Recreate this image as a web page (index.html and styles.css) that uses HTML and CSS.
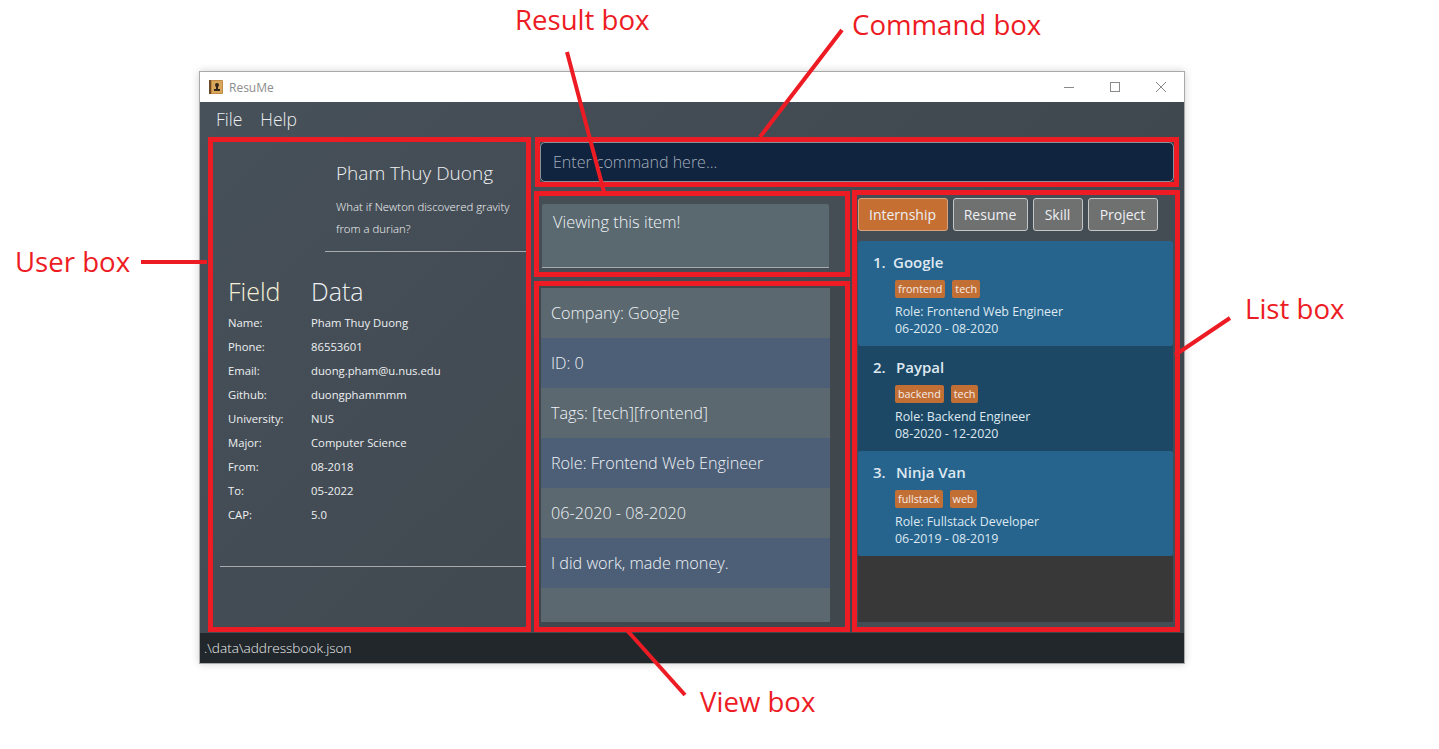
FILE: index.html
```html
<!DOCTYPE html>
<html lang="en">
<head>
    <meta charset="UTF-8">
    <meta name="viewport" content="width=device-width, initial-scale=1.0">
    <title>ResuMe - Layout</title>
    <link rel="stylesheet" href="styles.css">
</head>
<body>
    <!-- annotation labels and pointers -->
    <span class="note note-result">Result box</span>
    <span class="note note-command">Command box</span>
    <span class="note note-user">User box</span>
    <span class="note note-list">List box</span>
    <span class="note note-view">View box</span>

    <div class="window">
        <div class="titlebar">
            <svg class="app-icon" width="14" height="14" viewBox="0 0 14 14">
                <rect x="0" y="0" width="14" height="14" rx="1" fill="#c08a42"/>
                <rect x="0" y="0" width="2" height="14" fill="#6b4a25"/>
                <rect x="3" y="1" width="10" height="12" fill="#d9a75c"/>
                <circle cx="8" cy="5" r="2" fill="#33261a"/>
                <rect x="7" y="6" width="2" height="3" fill="#33261a"/>
                <rect x="5" y="9" width="6" height="2" fill="#33261a"/>
            </svg>
            <span class="app-name">ResuMe</span>
            <div class="window-controls">
                <svg width="12" height="12" viewBox="0 0 12 12"><path d="M1 6.5h10" stroke="#8a8a8a" fill="none"/></svg>
                <svg width="12" height="12" viewBox="0 0 12 12"><rect x="1.5" y="1.5" width="9" height="9" stroke="#8a8a8a" fill="none"/></svg>
                <svg width="12" height="12" viewBox="0 0 12 12"><path d="M1 1l10 10M11 1L1 11" stroke="#8a8a8a" fill="none"/></svg>
            </div>
        </div>

        <div class="menubar">
            <span>File</span>
            <span>Help</span>
        </div>

        <div class="main">
            <section class="box user-box">
                <div class="user-head">
                    <div class="user-name">Pham Thuy Duong</div>
                    <p class="user-quote">What if Newton discovered gravity from a durian?</p>
                </div>
                <div class="user-table">
                    <div class="table-title">Field</div><div class="table-title">Data</div>
                    <div>Name:</div><div>Pham Thuy Duong</div>
                    <div>Phone:</div><div>86553601</div>
                    <div>Email:</div><div>duong.pham@u.nus.edu</div>
                    <div>Github:</div><div>duongphammmm</div>
                    <div>University:</div><div>NUS</div>
                    <div>Major:</div><div>Computer Science</div>
                    <div>From:</div><div>08-2018</div>
                    <div>To:</div><div>05-2022</div>
                    <div>CAP:</div><div>5.0</div>
                </div>
                <div class="user-rule"></div>
            </section>

            <div class="right-side">
                <section class="box command-box">
                    <input class="command-input" type="text" placeholder="Enter command here...">
                </section>

                <div class="lower">
                    <div class="middle">
                        <section class="box result-box">
                            <div class="result-text">Viewing this item!</div>
                        </section>
                        <section class="box view-box">
                            <div class="view-list">
                                <div class="view-row">Company: Google</div>
                                <div class="view-row">ID: 0</div>
                                <div class="view-row">Tags: [tech][frontend]</div>
                                <div class="view-row">Role: Frontend Web Engineer</div>
                                <div class="view-row">06-2020 - 08-2020</div>
                                <div class="view-row">I did work, made money.</div>
                            </div>
                        </section>
                    </div>

                    <section class="box list-box">
                        <div class="tabs">
                            <button class="tab tab-active">Internship</button>
                            <button class="tab tab-resume">Resume</button>
                            <button class="tab tab-skill">Skill</button>
                            <button class="tab tab-project">Project</button>
                        </div>
                        <div class="cards">
                            <div class="card">
                                <div class="card-title"><span class="card-num">1.</span>Google</div>
                                <div class="tags"><span class="tag">frontend</span><span class="tag">tech</span></div>
                                <div class="card-line">Role: Frontend Web Engineer</div>
                                <div class="card-line">06-2020 - 08-2020</div>
                            </div>
                            <div class="card card-alt">
                                <div class="card-title"><span class="card-num wide">2.</span>Paypal</div>
                                <div class="tags"><span class="tag">backend</span><span class="tag">tech</span></div>
                                <div class="card-line">Role: Backend Engineer</div>
                                <div class="card-line">08-2020 - 12-2020</div>
                            </div>
                            <div class="card">
                                <div class="card-title"><span class="card-num wide">3.</span>Ninja Van</div>
                                <div class="tags"><span class="tag">fullstack</span><span class="tag">web</span></div>
                                <div class="card-line">Role: Fullstack Developer</div>
                                <div class="card-line">06-2019 - 08-2019</div>
                            </div>
                        </div>
                    </section>
                </div>
            </div>
        </div>

        <div class="statusbar">.\data\addressbook.json</div>
    </div>

    <svg class="pointers" width="1439" height="749" viewBox="0 0 1439 749">
        <path d="M567 52L604 192M842 30L760 137M141 262H207M1230 318L1175 355M625 628L685 695"/>
    </svg>
</body>
</html>
```
FILE: styles.css
```css
body {
    margin: 0;
    height: 749px;
    overflow: hidden;
    background-color: #ffffff;
    font-family: "Open Sans", sans-serif;
    color: #ffffff;
    position: relative;
}

/* annotations */
.note {
    position: absolute;
    color: #ed1c24;
    font-family: "Open Sans", sans-serif;
    font-size: 27.6px;
    line-height: 34px;
    white-space: nowrap;
}
.note-result { left: 515px; top: 2px; }
.note-command { left: 852px; top: 7px; }
.note-user { left: 15px; top: 244px; }
.note-list { left: 1245px; top: 291px; }
.note-view { left: 700px; top: 684px; }
.pointers {
    position: absolute;
    left: 0;
    top: 0;
    pointer-events: none;
}
.pointers path {
    stroke: #ed1c24;
    stroke-width: 4;
    fill: none;
}

/* window */
.window {
    position: absolute;
    left: 199px;
    top: 71px;
    width: 984px;
    height: 591px;
    border: 1px solid #a9a9a9;
    box-shadow: 0 0 8px rgba(0, 0, 0, 0.18);
    display: flex;
    flex-direction: column;
    background: linear-gradient(135deg, #47515a, #3c4349);
}
.titlebar {
    height: 30px;
    flex: none;
    background-color: #ffffff;
    display: flex;
    align-items: center;
    padding-left: 9px;
}
.app-icon { margin-right: 6px; }
.app-name {
    font-size: 12px;
    color: #8d8d8d;
}
.window-controls {
    margin-left: auto;
    display: flex;
    gap: 34px;
    padding-right: 17px;
}
.menubar {
    height: 34px;
    margin-bottom: 1px;
    flex: none;
    display: flex;
    align-items: center;
    gap: 18px;
    padding-left: 16px;
    font-size: 17.5px;
    font-weight: 300;
    color: #eceef0;
}
.main {
    height: 496px;
    flex: none;
    display: flex;
    padding-left: 8px;
}
.statusbar {
    height: 30px;
    flex: none;
    box-sizing: border-box;
    padding-left: 4px;
    line-height: 30px;
    font-size: 13.6px;
    font-weight: 300;
    color: #eceef0;
    background-color: #22272b;
}
.box {
    border: 5px solid #ed1c24;
    box-sizing: border-box;
}

/* user box */
.user-box {
    width: 323px;
    height: 495px;
    flex: none;
    color: #eef0f2;
}
.user-head {
    margin-left: 112px;
    padding: 18px 0 9px 11px;
    height: 110px;
    box-sizing: border-box;
    border-bottom: 1px solid #a7abae;
}
.user-name {
    font-size: 19px;
    font-weight: 300;
    line-height: 26px;
}
.user-quote {
    margin: 10px 0 0;
    font-size: 11.4px;
    line-height: 22px;
    font-weight: 300;
    color: #f6f7f8;
    width: 190px;
}
.user-table {
    display: grid;
    grid-template-columns: 83px 1fr;
    grid-auto-rows: 24px;
    align-items: center;
    padding: 34px 0 0 15px;
    font-size: 11.3px;
}
.table-title {
    height: 38px;
    font-size: 25px;
    font-weight: 300;
    line-height: 38px;
    color: #f3efd6;
}
.user-table .table-title { align-self: end; }
.table-title + .table-title { color: #eef0f2; }
.user-rule {
    margin: 40px 0 0 7px;
    border-top: 1px solid #a7abae;
}

/* right side */
.right-side {
    margin-left: 3px;
    width: 646px;
    display: flex;
    flex-direction: column;
}
.command-box {
    height: 50px;
    margin-left: 1px;
    width: 644px;
    flex: none;
}
.command-input {
    display: block;
    width: 100%;
    height: 40px;
    box-sizing: border-box;
    padding: 0 12px;
    margin: 0;
    border: 1px solid #8b9096;
    border-radius: 5px;
    background-color: #11243f;
    font-family: "Open Sans", sans-serif;
    font-size: 16px;
    font-weight: 300;
    color: #ffffff;
    outline: none;
}
.command-input::placeholder {
    color: #a3aebb;
    opacity: 1;
}
.lower {
    display: flex;
    margin-top: 3px;
    gap: 2px;
}
.middle {
    width: 316px;
    flex: none;
    display: flex;
    flex-direction: column;
    padding-top: 1px;
}

/* result box */
.result-box {
    height: 86px;
    padding: 8px 16px 4px 3px;
    background-color: #454e55;
}
.result-text {
    height: 100%;
    box-sizing: border-box;
    padding: 6px 11px;
    background-color: #5a6870;
    border-radius: 2px 2px 0 0;
    border-bottom: 1px solid #a7abae;
    font-size: 16.4px;
    font-weight: 300;
    line-height: 24px;
    color: #f0f4f8;
}

/* view box */
.view-box {
    height: 351px;
    margin-top: 4px;
    padding: 2px 15px 5px 2px;
    background-color: #40484e;
}
.view-list {
    height: 334px;
    background-color: #5b686f;
}
.view-row {
    height: 50px;
    box-sizing: border-box;
    padding-left: 10px;
    line-height: 50px;
    font-size: 16.2px;
    font-weight: 300;
    color: #f0f4f8;
}
.view-row:nth-child(even) { background-color: #4d5f76; }

/* list box */
.list-box {
    width: 328px;
    height: 442px;
    flex: none;
    padding: 3px 2px 0 1px;
    background-color: #444d54;
}
.tabs {
    display: flex;
    gap: 5px;
    height: 33px;
}
.tab {
    height: 33px;
    padding: 0 1px 0 0;
    border: 1px solid #c4c6c8;
    border-radius: 3px;
    background-color: #6f7070;
    color: #eef0f4;
    font-family: "Open Sans", sans-serif;
    font-size: 14px;
    cursor: pointer;
}
.tab-active { width: 90px; background-color: #c56f33; border-color: #d9a27a; }
.tab-resume { width: 75px; }
.tab-skill { width: 50px; }
.tab-project { width: 70px; }
.cards {
    margin-top: 10px;
    height: 381px;
    background-color: #383838;
}
.card {
    height: 105px;
    box-sizing: border-box;
    padding: 10px 0 0 37px;
    background-color: #26648e;
    border-radius: 2px;
    color: #dfe8f0;
    font-size: 12.4px;
}
.card-alt { background-color: #1c4866; border-radius: 0; }
.card-title {
    height: 22px;
    line-height: 22px;
    font-size: 15px;
    font-weight: 600;
    margin-left: -22px;
}
.card-num { display: inline-block; width: 20px; }
.card-num.wide { width: 23px; }
.tags {
    display: flex;
    gap: 7px;
    margin-top: 7px;
    height: 18px;
}
.tag {
    padding: 0 3px;
    line-height: 18px;
    font-size: 10.8px;
    background-color: #c26f35;
    border-radius: 2px;
    color: #f5ece6;
}
.card-line {
    line-height: 17px;
}
.tags + .card-line { margin-top: 5px; }
```
